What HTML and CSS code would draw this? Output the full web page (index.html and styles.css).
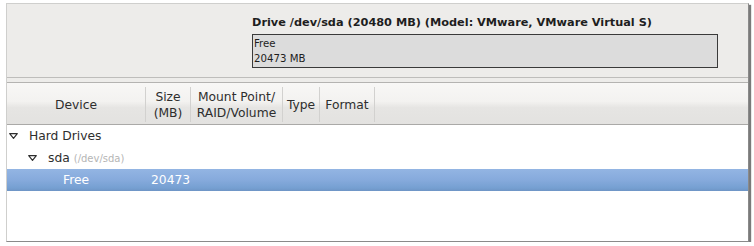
FILE: index.html
```html
<!DOCTYPE html>
<html lang="en">
<head>
  <meta charset="UTF-8">
  <title>Partitioning</title>
  <link rel="stylesheet" href="styles.css">
</head>
<body>
  <div class="frame">
    <div class="drive-panel">
      <div class="drive-title">Drive /dev/sda (20480 MB) (Model: VMware, VMware Virtual S)</div>
      <div class="drive-bar">
        <div class="seg-free">Free<br>20473 MB</div>
      </div>
    </div>

    <div class="list">
      <div class="list-head">
        <div class="col col-device">Device</div>
        <div class="col col-size">Size<br>(MB)</div>
        <div class="col col-mount">Mount Point/<br>RAID/Volume</div>
        <div class="col col-type">Type</div>
        <div class="col col-format">Format</div>
        <div class="col col-rest"></div>
      </div>

      <div class="row">
        <div class="cell-device lvl0">
          <svg class="expander" width="9" height="6" viewBox="0 0 9 6"><path d="M0.7 0.7 H8.3 L4.5 5.3 Z" fill="#fff" stroke="#2e2e2e" stroke-width="1.2" stroke-linejoin="round"/></svg>
          <span>Hard Drives</span>
        </div>
      </div>
      <div class="row">
        <div class="cell-device lvl1">
          <svg class="expander" width="9" height="6" viewBox="0 0 9 6"><path d="M0.7 0.7 H8.3 L4.5 5.3 Z" fill="#fff" stroke="#2e2e2e" stroke-width="1.2" stroke-linejoin="round"/></svg>
          <span>sda</span> <span class="dev-path">(/dev/sda)</span>
        </div>
      </div>
      <div class="row selected">
        <div class="cell-device lvl2"><span>Free</span></div>
        <div class="cell-size">20473</div>
      </div>
    </div>
  </div>
</body>
</html>
```

FILE: styles.css
```css
body {
  margin: 0;
  background: #ffffff;
  font-family: "DejaVu Sans", sans-serif;
  color: #2e2e2e;
}
.frame {
  margin: 3px 0 0 6px;
  width: 741px;
  height: 237px;
  background: #ffffff;
  border-left: 1px solid #cfcfcd;
  border-top: 1px solid #cfcfcd;
  border-right: 1px solid #8a8a8a;
  border-bottom: 1px solid #8a8a8a;
  box-shadow: 2px 2px 1px #7a7a7a;
  display: flex;
  flex-direction: column;
}
.drive-panel {
  background: #edecea;
  height: 74px;
  border-bottom: 1px solid #bebdbb;
  padding-left: 245px;
  box-sizing: border-box;
  padding-top: 12px;
}
.drive-title {
  font-weight: bold;
  font-size: 11.3px;
  line-height: 14px;
  color: #1e1e1e;
  margin-bottom: 4px;
}
.drive-bar {
  width: 466px;
  height: 34px;
  box-sizing: border-box;
  border: 1.5px solid #3a3a3a;
  background: #dcdcdc;
}
.seg-free {
  font-size: 10.2px;
  line-height: 15px;
  padding: 1px 0 0 1px;
  color: #1e1e1e;
}
.list {
  flex: 1;
  margin-top: 4px;
  border-top: 1px solid #b4b3b1;
  background: #ffffff;
  box-shadow: 0 -4px 0 #edecea;
}
.list-head {
  display: flex;
  height: 41px;
  background: linear-gradient(#f8f7f6, #f3f2f0 45%, #e6e5e3 60%, #e3e2e0);
  border-bottom: 1px solid #aaa9a7;
  font-size: 12.3px;
  line-height: 16px;
}
.col {
  display: flex;
  align-items: center;
  justify-content: center;
  text-align: center;
  border-right: 1px solid #d2d1cf;
  box-sizing: border-box;
  height: 35px;
  margin-top: 4px;
}
.col-device { width: 139px; }
.col-size { width: 45px; }
.col-mount { width: 92px; }
.col-type { width: 37px; }
.col-format { width: 55px; }
.col-rest { flex: 1; border-right: none; }
.row {
  display: flex;
  height: 22px;
  align-items: center;
  font-size: 12.3px;
}
.row:first-of-type { margin-top: 1px; }
.cell-device {
  width: 139px;
  display: flex;
  align-items: center;
  box-sizing: border-box;
}
.lvl0 { padding-left: 2px; }
.lvl1 { padding-left: 21px; }
.lvl2 { padding-left: 56px; }
.expander { margin-right: 11px; }
.dev-path {
  font-size: 10px;
  color: #b5b5b5;
  margin-left: 4px;
}
.cell-size { padding-left: 5px; }
.selected {
  background: linear-gradient(#93b5e3, #86aadc 50%, #76a0d2 85%, #6e95c6);
  color: #ffffff;
}
```
